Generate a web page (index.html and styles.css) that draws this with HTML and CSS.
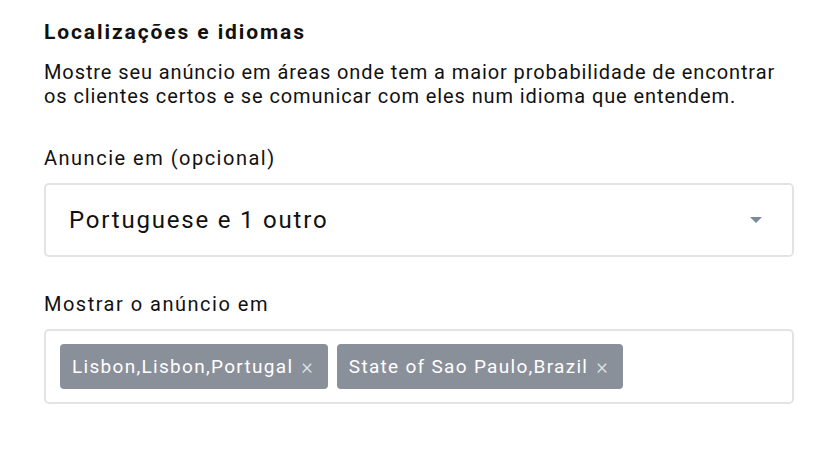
FILE: index.html
```html
<!DOCTYPE html>
<html lang="pt">
<head>
    <meta charset="UTF-8">
    <meta name="viewport" content="width=device-width, initial-scale=1.0">
    <title>Localizações e idiomas</title>
    <link rel="stylesheet" href="styles.css">
</head>
<body>
    <div class="section">
        <h2 class="title">Localizações e idiomas</h2>
        <p class="desc">Mostre seu anúncio em áreas onde tem a maior probabilidade de encontrar os clientes certos e se comunicar com eles num idioma que entendem.</p>

        <div class="field">
            <label class="label">Anuncie em (opcional)</label>
            <div class="select">
                <span class="select-value">Portuguese e 1 outro</span>
                <span class="caret"></span>
            </div>
        </div>

        <div class="field">
            <label class="label">Mostrar o anúncio em</label>
            <div class="tags">
                <span class="tag">Lisbon,Lisbon,Portugal<span class="tag-x">×</span></span>
                <span class="tag">State of Sao Paulo,Brazil<span class="tag-x">×</span></span>
            </div>
        </div>
    </div>
</body>
</html>
```
FILE: styles.css
```css
body {
    font-family: Roboto, "Noto Sans", sans-serif;
    background: #ffffff;
    color: #111111;
    margin: 0;
    padding: 19px 44px;
}
.section {
    width: 750px;
}
.title {
    font-size: 21px;
    font-weight: 700;
    letter-spacing: 1.9px;
    margin: 0 0 15px;
    line-height: 26px;
}
.desc {
    font-size: 20px;
    letter-spacing: 0.9px;
    line-height: 24px;
    margin: 0 0 38px;
}
.field {
    margin-bottom: 35px;
}
.label {
    display: block;
    font-size: 20px;
    letter-spacing: 1.5px;
    line-height: 24px;
    margin-bottom: 13px;
}
.select {
    display: flex;
    align-items: center;
    justify-content: space-between;
    height: 70px;
    padding: 0 30px 0 23px;
    border: 2px solid #e3e3e3;
    border-radius: 5px;
}
.select-value {
    font-size: 24px;
    letter-spacing: 1.8px;
}
.caret {
    width: 0;
    height: 0;
    border-left: 6px solid transparent;
    border-right: 6px solid transparent;
    border-top: 6px solid #7a8a99;
}
.tags {
    display: flex;
    gap: 9px;
    padding: 13px 14px;
    border: 2px solid #e3e3e3;
    border-radius: 5px;
}
.tag {
    display: inline-flex;
    align-items: center;
    height: 45px;
    padding: 0 15px 0 12px;
    background: #8a9099;
    color: #ffffff;
    border-radius: 4px;
    font-size: 19px;
    letter-spacing: 1.3px;
}
.tag-x {
    margin-left: 8px;
    font-size: 22px;
    font-weight: 300;
    letter-spacing: 0;
    color: #dfe2e6;
}
```
